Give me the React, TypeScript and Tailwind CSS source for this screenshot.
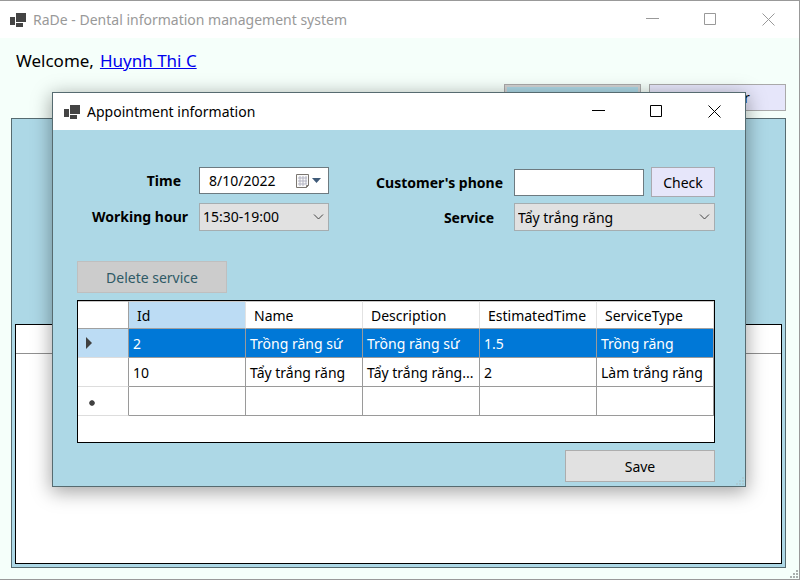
import type { ReactNode } from "react";

const columns = ["Id", "Name", "Description", "EstimatedTime", "ServiceType"];

const rows = [
  ["2", "Trồng răng sứ", "Trồng răng sứ", "1.5", "Trồng răng"],
  ["10", "Tẩy trắng răng", "Tẩy trắng răng...", "2", "Làm trắng răng"],
];

function AppIcon() {
  return (
    <svg width="16" height="16" viewBox="0 0 16 16" fill="#444444" aria-hidden="true">
      <rect x="0" y="5" width="5" height="8" />
      <rect x="6" y="1" width="10" height="9" />
      <rect x="6" y="11" width="7" height="4" />
    </svg>
  );
}

function TitleBar({ title, active }: { title: string; active?: boolean }) {
  return (
    <header
      className={`flex h-[37px] shrink-0 items-center bg-white pr-[2px] text-[14px] ${
        active ? "pl-[11px] text-black" : "pl-[10px] text-[#999999]"
      }`}
    >
      <AppIcon />
      <h1 className="flex-1 pl-[7px]">{title}</h1>
      <WindowButton label="Minimize">
        <path d="M0 5.5h13" />
      </WindowButton>
      <WindowButton label="Maximize">
        <path d="M.5 .5h11v11h-11z" />
      </WindowButton>
      <WindowButton label="Close">
        <path d="M.5 .5l12 12M12.5 .5l-12 12" />
      </WindowButton>
    </header>
  );
}

function WindowButton({ label, children }: { label: string; children: ReactNode }) {
  return (
    <button aria-label={label} className="flex h-full w-[58px] items-center justify-center">
      <svg width="13" height="13" viewBox="0 0 13 13" fill="none" stroke="currentColor">
        {children}
      </svg>
    </button>
  );
}

function DropDown({ id, options }: { id: string; options: string[] }) {
  return (
    <div className="relative h-7 w-full">
      <select
        id={id}
        className="h-full w-full appearance-none border border-[#a5adb0] bg-[#e1e1e1] pl-[3px] pr-6"
      >
        {options.map((o) => (
          <option key={o}>{o}</option>
        ))}
      </select>
      <svg
        className="pointer-events-none absolute right-[5px] top-[10px]"
        width="11"
        height="8"
        viewBox="0 0 11 8"
        fill="none"
        stroke="#444444"
      >
        <path d="M1 1.5l4.5 4.5L10 1.5" />
      </svg>
    </div>
  );
}

function DatePicker() {
  return (
    <div className="flex h-[27px] w-full items-center border border-[#6d7a80] bg-white">
      <input id="time" defaultValue="8/10/2022" className="min-w-0 flex-1 pl-[9px] outline-none" />
      <button aria-label="Open calendar" className="pr-[7px]">
        <svg width="26" height="16" viewBox="0 0 26 16">
          <path d="M1.5 1.5h12v11l-2 2h-10z" fill="#fafafa" stroke="#7b7670" />
          <path
            d="M3 5h9M3 8h9M3 11h9M5 3v10M8 3v10M11 3v8"
            fill="none"
            stroke="#b3b3c2"
          />
          <path d="M13.5 12.5h-2v2" fill="none" stroke="#7b7670" />
          <path d="M17 5h9l-4.5 5z" fill="#3f5a78" />
        </svg>
      </button>
    </div>
  );
}

function Grip({ className }: { className: string }) {
  return (
    <svg
      className={`pointer-events-none absolute bottom-0 right-0 ${className}`}
      width="10"
      height="10"
      viewBox="0 0 10 10"
      fill="#a9b0ae"
      aria-hidden="true"
    >
      <path d="M7 1h2v2H7zM4 4h2v2H4zM7 4h2v2H7zM1 7h2v2H1zM4 7h2v2H4zM7 7h2v2H7z" />
    </svg>
  );
}

const cell = "h-[29px] whitespace-nowrap border-b border-r border-[#9a9a9a] px-1 py-0";
const rowHead = "h-[29px] border-b border-r border-b-[#dddddd] border-r-[#9a9a9a] p-0 pl-2";

function ServiceTable() {
  return (
    <div className="h-[143px] border border-black bg-white">
      <table className="w-full table-fixed border-separate border-spacing-0 text-left">
        <thead>
          <tr>
            <td className="h-7 w-[51px] border-b border-r border-t border-[#a0a0a0] border-t-[#c8c8c8] p-0" />
            {columns.map((c, i) => (
              <th
                key={c}
                scope="col"
                className={`h-7 border-b border-r border-t border-b-[#a0a0a0] border-r-[#e2e2e2] border-t-[#c8c8c8] p-0 pl-2 font-normal ${
                  i === 0 ? "bg-[#bcdcf4]" : ""
                }`}
              >
                {c}
              </th>
            ))}
          </tr>
        </thead>
        <tbody>
          {rows.map((r, i) => (
            <tr key={r[0]} className={i === 0 ? "bg-[#0078d7] text-white" : ""}>
              <td className={`${rowHead} ${i === 0 ? "bg-[#bcdcf4]" : ""}`}>
                {i === 0 && (
                  <svg width="7" height="12" viewBox="0 0 7 12" fill="#404040">
                    <path d="M0 0l6 6-6 6z" />
                  </svg>
                )}
              </td>
              {r.map((v, j) => (
                <td key={j} className={cell}>
                  {v}
                </td>
              ))}
            </tr>
          ))}
          <tr>
            <td className={rowHead}>
              <svg className="mt-1" width="12" height="8" viewBox="0 0 12 8" stroke="#404040" strokeWidth="1.5">
                <path d="M6 1v6M3 4h6M4 2l4 4M8 2l-4 4" />
              </svg>
            </td>
            {columns.map((c) => (
              <td key={c} className={cell} />
            ))}
          </tr>
        </tbody>
      </table>
    </div>
  );
}

function AppointmentDialog() {
  return (
    <section
      role="dialog"
      aria-label="Appointment information"
      className="absolute left-[52px] right-[53px] top-[91px] border border-[#566b70] bg-[#add8e6] shadow-[0_4px_18px_1px_rgba(0,0,0,0.36)]"
    >
      <TitleBar title="Appointment information" active />
      <div className="flex flex-col pb-1 pl-6 pr-[30px] pt-[37px]">
        <div className="flex justify-between">
          <div className="grid grid-cols-[122px_130px] items-center gap-y-2">
            <label htmlFor="time" className="pr-[18px] text-right font-bold">
              Time
            </label>
            <DatePicker />
            <label htmlFor="hour" className="pr-[11px] text-right font-bold">
              Working hour
            </label>
            <DropDown id="hour" options={["15:30-19:00", "8:00-11:30"]} />
          </div>
          <div className="grid grid-cols-[auto_201px] items-center gap-y-[6px]">
            <label htmlFor="phone" className="pr-[11px] text-right font-bold">
              Customer's phone
            </label>
            <div className="flex items-center gap-[7px]">
              <input
                id="phone"
                type="tel"
                className="h-[27px] min-w-0 flex-1 border border-[#6d7a80] bg-white px-1"
              />
              <button className="h-[30px] w-16 border border-[#a9a9b0] bg-[#e6e6fa]">Check</button>
            </div>
            <label htmlFor="service" className="pr-5 text-right font-bold">
              Service
            </label>
            <DropDown id="service" options={["Tẩy trắng răng", "Trồng răng sứ"]} />
          </div>
        </div>
        <button
          disabled
          className="mb-[7px] mt-[30px] h-8 w-[150px] border border-[#bfbfbf] bg-[#cccccc] text-[#2f5a66]"
        >
          Delete service
        </button>
        <ServiceTable />
        <button className="mt-[7px] h-8 w-[150px] self-end border border-[#adadad] bg-[#e1e1e1]">
          Save
        </button>
      </div>
      <Grip className="opacity-30" />
    </section>
  );
}

export default function App() {
  return (
    <div className="relative flex min-h-screen flex-col border-b border-r border-t border-[#999999] bg-[#f5fffa] font-['Noto_Sans','Open_Sans',sans-serif] text-[14px] text-black">
      <TitleBar title="RaDe - Dental information management system" />
      <main className="flex flex-1 flex-col pb-[11px] pl-[11px] pr-[13px]">
        <p className="flex h-[46px] items-center gap-[6px] pl-[5px] text-[17px]">
          Welcome,
          <a href="#profile" className="text-[#0000ee] underline">
            Huynh Thi C
          </a>
        </p>
        <div className="flex justify-end gap-2">
          <button className="h-[27px] w-[137px] border border-[#a9a9a9] bg-[#add8e6] outline-2 -outline-offset-3 outline-[#d3d3d3]">
            Appointment
          </button>
          <button className="h-[27px] w-[137px] border border-[#a9a9a9] bg-[#e6e6fa]">
            Customer
          </button>
        </div>
        <div className="mt-[7px] flex flex-1 flex-col border border-[#566b70] bg-[#add8e6] px-[3px] pb-[3px] pt-[205px]">
          <div className="flex-1 border border-black bg-white">
            <div className="h-[29px] border-b border-[#909090]" />
          </div>
        </div>
      </main>
      <AppointmentDialog />
      <Grip className="" />
    </div>
  );
}
